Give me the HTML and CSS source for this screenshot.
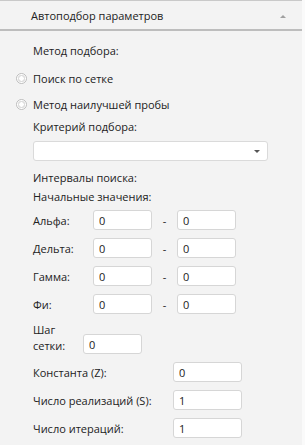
FILE: index.html
```html
<!DOCTYPE html>
<html lang="ru">
<head>
    <meta charset="UTF-8">
    <title>Автоподбор параметров</title>
    <link rel="stylesheet" href="styles.css">
</head>
<body>
    <div class="panel">
        <div class="panel-header">
            <span class="panel-title">Автоподбор параметров</span>
            <span class="collapse-arrow"></span>
        </div>

        <div class="panel-body">
            <div class="caption first">Метод подбора:</div>

            <label class="radio-row">
                <span class="radio"></span>
                <span>Поиск по сетке</span>
            </label>
            <label class="radio-row">
                <span class="radio"></span>
                <span>Метод наилучшей пробы</span>
            </label>

            <div class="caption">Критерий подбора:</div>
            <div class="select">
                <span class="select-arrow"></span>
            </div>

            <div class="caption interval">Интервалы поиска:</div>
            <div class="caption start">Начальные значения:</div>

            <div class="range-list">
                <div class="range-row">
                    <span class="range-label">Альфа:</span>
                    <input class="field" type="text" value="0">
                    <span class="dash">-</span>
                    <input class="field" type="text" value="0">
                </div>
                <div class="range-row">
                    <span class="range-label">Дельта:</span>
                    <input class="field" type="text" value="0">
                    <span class="dash">-</span>
                    <input class="field" type="text" value="0">
                </div>
                <div class="range-row">
                    <span class="range-label">Гамма:</span>
                    <input class="field" type="text" value="0">
                    <span class="dash">-</span>
                    <input class="field" type="text" value="0">
                </div>
                <div class="range-row">
                    <span class="range-label">Фи:</span>
                    <input class="field" type="text" value="0">
                    <span class="dash">-</span>
                    <input class="field" type="text" value="0">
                </div>
            </div>

            <div class="step-row">
                <span class="step-label">Шаг<br>сетки:</span>
                <input class="field" type="text" value="0">
            </div>

            <div class="param-list">
                <div class="param-row">
                    <span class="param-label">Константа (Z):</span>
                    <input class="field wide" type="text" value="0">
                </div>
                <div class="param-row">
                    <span class="param-label">Число реализаций (S):</span>
                    <input class="field wide" type="text" value="1">
                </div>
                <div class="param-row">
                    <span class="param-label">Число итераций:</span>
                    <input class="field wide" type="text" value="1">
                </div>
            </div>
        </div>
    </div>
</body>
</html>
```

FILE: styles.css
```css
* {
    margin: 0;
    padding: 0;
    box-sizing: border-box;
}

body {
    font-family: 'Open Sans', 'Noto Sans', sans-serif;
    font-size: 11px;
    color: #222;
    background: #fafafa;
}

.panel {
    width: 302px;
    height: 445px;
    background: #f3f3f3;
    border-top: 1px solid #c9c9c9;
}

.panel-header {
    height: 30px;
    display: flex;
    align-items: center;
    justify-content: space-between;
    padding: 0 16px 0 31px;
    border-bottom: 2px solid #bdbdbd;
}

.collapse-arrow {
    width: 0;
    height: 0;
    border-left: 3px solid transparent;
    border-right: 3px solid transparent;
    border-bottom: 3px solid #a0a0a0;
    margin-top: 2px;
}

.panel-body {
    padding-left: 33px;
    height: 413px;
    border-bottom: 2px solid #bdbdbd;
}

.caption {
    line-height: 20px;
}

.caption.first {
    margin-top: 10px;
}

.radio-row {
    display: flex;
    align-items: center;
    height: 26px;
    margin-left: -17px;
    gap: 6px;
}

.radio-row:first-of-type {
    margin-top: 4px;
}

.radio {
    width: 11px;
    height: 11px;
    border-radius: 50%;
    border: 1px solid #bdbdbd;
    background: radial-gradient(circle, #fff 0 2px, #dedede 2.5px 3.5px, #fff 4px);
}

.select {
    width: 235px;
    height: 20px;
    margin-top: 4px;
    background: #fff;
    border: 1px solid #dadada;
    border-radius: 3px;
    display: flex;
    align-items: center;
    justify-content: flex-end;
    padding-right: 7px;
}

.select-arrow {
    width: 0;
    height: 0;
    border-left: 3px solid transparent;
    border-right: 3px solid transparent;
    border-top: 3px solid #555;
}

.caption.interval {
    margin-top: 7px;
    line-height: 19px;
}

.caption.start {
    line-height: 19px;
}

.range-list {
    margin-top: 4px;
    display: flex;
    flex-direction: column;
    gap: 8px;
}

.range-row,
.param-row {
    display: flex;
    align-items: center;
}

.range-label {
    width: 60px;
}

.field {
    width: 59px;
    height: 20px;
    background: #fff;
    border: 1px solid #d6d6d6;
    border-radius: 3px;
    padding: 0 5px;
    font-family: inherit;
    font-size: 11px;
    color: #222;
    outline: none;
}

.field.wide {
    width: 69px;
}

.dash {
    width: 25px;
    text-align: center;
}

.step-row {
    display: flex;
    align-items: flex-end;
    margin-top: 8px;
}

.step-label {
    width: 50px;
    line-height: 16px;
}

.param-list {
    margin-top: 8px;
    display: flex;
    flex-direction: column;
    gap: 8px;
}

.param-label {
    width: 140px;
}
```
